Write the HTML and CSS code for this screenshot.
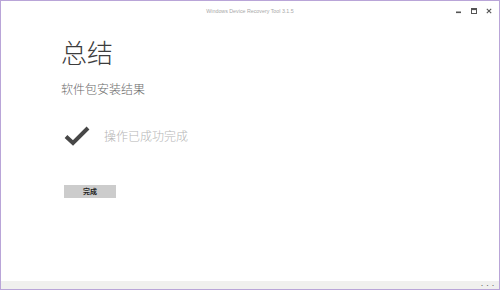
FILE: index.html
```html
<!DOCTYPE html>
<html lang="zh-CN">
<head>
<meta charset="utf-8">
<title>Windows Device Recovery Tool 3.1.5</title>
<link rel="stylesheet" href="styles.css">
</head>
<body>
<div class="window">
  <div class="titlebar">
    <div class="title">Windows Device Recovery Tool 3.1.5</div>
    <div class="controls">
      <svg class="ctl" width="8" height="8" viewBox="0 0 8 8"><rect x="1" y="4.5" width="5" height="1.6" fill="#555"/></svg>
      <svg class="ctl" width="8" height="8" viewBox="0 0 8 8"><rect x="1.5" y="1.5" width="5" height="5" fill="none" stroke="#555" stroke-width="1"/><rect x="1.5" y="1.5" width="5" height="1.6" fill="#555"/></svg>
      <svg class="ctl" width="8" height="8" viewBox="0 0 8 8"><path d="M1.8 1.8 L6.2 6.2 M6.2 1.8 L1.8 6.2" stroke="#555" stroke-width="1.1"/></svg>
    </div>
  </div>
  <div class="content">
    <h1 class="heading">总结</h1>
    <div class="subheading">软件包安装结果</div>
    <div class="result">
      <svg class="check" width="26" height="20" viewBox="0 0 26 20"><path d="M2 10.5 L9 17 L24 2" fill="none" stroke="#474747" stroke-width="4"/></svg>
      <span class="result-text">操作已成功完成</span>
    </div>
    <button class="btn">完成</button>
  </div>
  <div class="statusbar"><span class="dots">•••</span></div>
</div>
</body>
</html>
```
FILE: styles.css
```css
html, body {
  margin: 0;
  padding: 0;
  background: #ffffff;
}
body {
  font-family: "Noto Sans CJK SC", "Noto Sans", "Liberation Sans", sans-serif;
}
.window {
  box-sizing: border-box;
  width: 500px;
  height: 290px;
  border: 1px solid #b9a5d8;
  display: flex;
  flex-direction: column;
  background: #ffffff;
}
.titlebar {
  height: 20px;
  display: flex;
  align-items: center;
  justify-content: center;
  position: relative;
}
.title {
  font-family: "Liberation Sans", sans-serif;
  font-size: 5.3px;
  color: #a8a8a8;
  margin-top: -1px;
}
.controls {
  position: absolute;
  right: 6px;
  top: 6px;
  display: flex;
  gap: 7px;
}
.ctl {
  display: block;
}
.content {
  flex: 1;
  padding: 16px 0 0 60px;
}
.heading {
  margin: 0;
  font-size: 26px;
  font-weight: 300;
  line-height: 30px;
  color: #3c3c3c;
}
.subheading {
  margin-top: 14px;
  font-size: 12px;
  font-weight: 300;
  line-height: 16px;
  color: #6a6a6a;
}
.result {
  margin-top: 29px;
  display: flex;
  align-items: center;
  gap: 14px;
  padding-left: 3px;
}
.check {
  display: block;
}
.result-text {
  font-size: 12px;
  font-weight: 300;
  color: #b5b5b5;
  line-height: 16px;
}
.btn {
  margin-top: 39px;
  margin-left: 3px;
  width: 52px;
  height: 13px;
  border: none;
  padding: 0;
  background: #cccccc;
  font-family: "Noto Sans CJK SC", sans-serif;
  font-size: 7px;
  font-weight: 700;
  color: #222222;
  line-height: 13px;
  display: block;
}
.statusbar {
  height: 8px;
  background: #f0f0ee;
  display: flex;
  justify-content: flex-end;
  align-items: center;
  padding-right: 3px;
}
.dots {
  font-size: 5px;
  letter-spacing: 0.5px;
  color: #666;
  line-height: 8px;
}
```
